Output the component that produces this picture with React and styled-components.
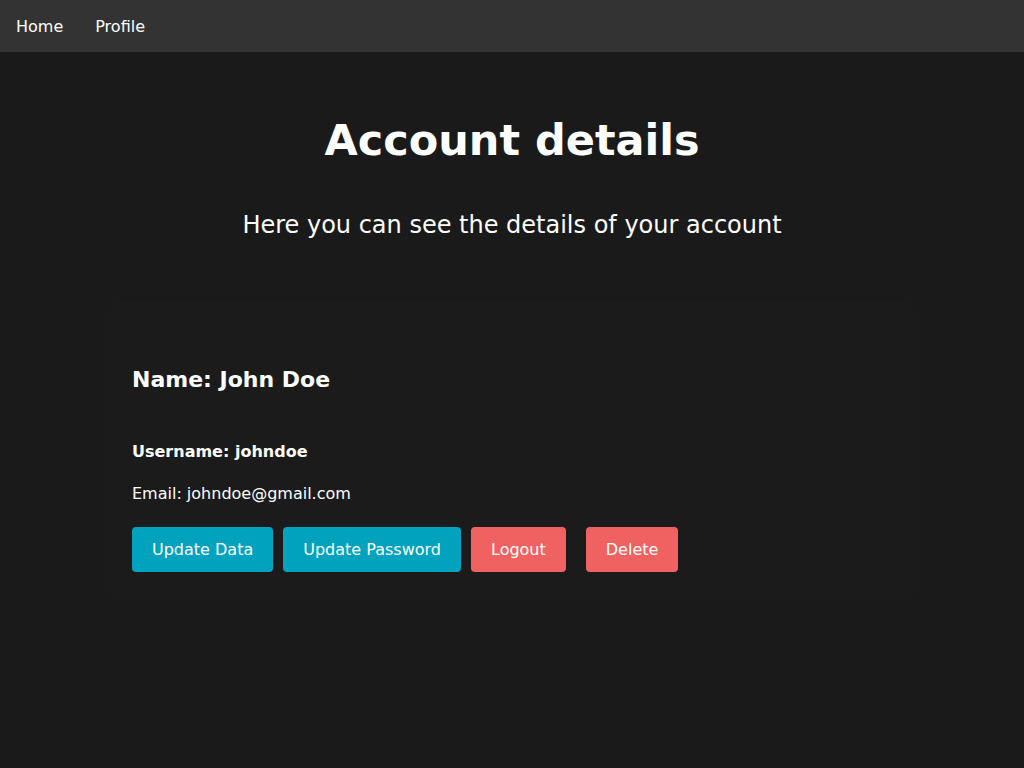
import React from 'react'
import styled, { createGlobalStyle } from 'styled-components'

const GlobalStyle = createGlobalStyle`
  body {
    margin: 0;
    background-color: #1a1a1a;
    color: #fff;
    font-family: "DejaVu Sans", "Noto Sans", sans-serif;
  }
`;

const Nav = styled.nav`
  display: flex;
  align-items: center;
  gap: 32px;
  height: 52px;
  padding: 0 16px;
  background-color: #333333;
`;

const NavLink = styled.a`
  color: #fff;
  font-size: 16px;
  text-decoration: none;
  cursor: pointer;
`;

const Main = styled.main`
  display: flex;
  flex-direction: column;
  align-items: center;
  padding-top: 52px;
`;

const Title = styled.h1`
  margin: 0;
  font-size: 43px;
  line-height: 72px;
  font-weight: 600;
`;

const Subtitle = styled.h3`
  margin: 31px 0 0;
  font-size: 24px;
  line-height: 36px;
  font-weight: 400;
`;

const Card = styled.div`
  width: 800px;
  box-sizing: border-box;
  margin-top: 57px;
  padding: 62px 20px 28px;
  background-color: #1b1b1b;
  border-radius: 6px;
  box-shadow: 0 0 4px rgba(255, 255, 255, 0.02);
  display: flex;
  flex-direction: column;
`;

const Name = styled.h2`
  margin: 0;
  font-size: 22px;
  line-height: 36px;
  font-weight: 600;
`;

const Username = styled.h3`
  margin: 40px 0 0;
  font-size: 16px;
  line-height: 28px;
  font-weight: 600;
`;

const Email = styled.p`
  margin: 16px 0 0;
  font-size: 16px;
  line-height: 24px;
`;

const Actions = styled.div`
  display: flex;
  gap: 10px;
  margin-top: 21px;
`;

const Button = styled.button`
  height: 45px;
  padding: 0 20px;
  border: none;
  border-radius: 4px;
  font-family: inherit;
  font-size: 16px;
  color: #fff;
  cursor: pointer;
  background-color: ${p => (p.$danger ? '#f06262' : '#00a2be')};
  margin-left: ${p => (p.$spaced ? '10px' : '0')};
`;

export default function App() {
  return (
    <>
      <GlobalStyle />
      <Nav>
        <NavLink>Home</NavLink>
        <NavLink>Profile</NavLink>
      </Nav>
      <Main>
        <Title>Account details</Title>
        <Subtitle>Here you can see the details of your account</Subtitle>
        <Card>
          <Name>Name: John Doe</Name>
          <Username>Username: johndoe</Username>
          <Email>Email: johndoe@gmail.com</Email>
          <Actions>
            <Button>Update Data</Button>
            <Button>Update Password</Button>
            <Button $danger>Logout</Button>
            <Button $danger $spaced>Delete</Button>
          </Actions>
        </Card>
      </Main>
    </>
  )
}
